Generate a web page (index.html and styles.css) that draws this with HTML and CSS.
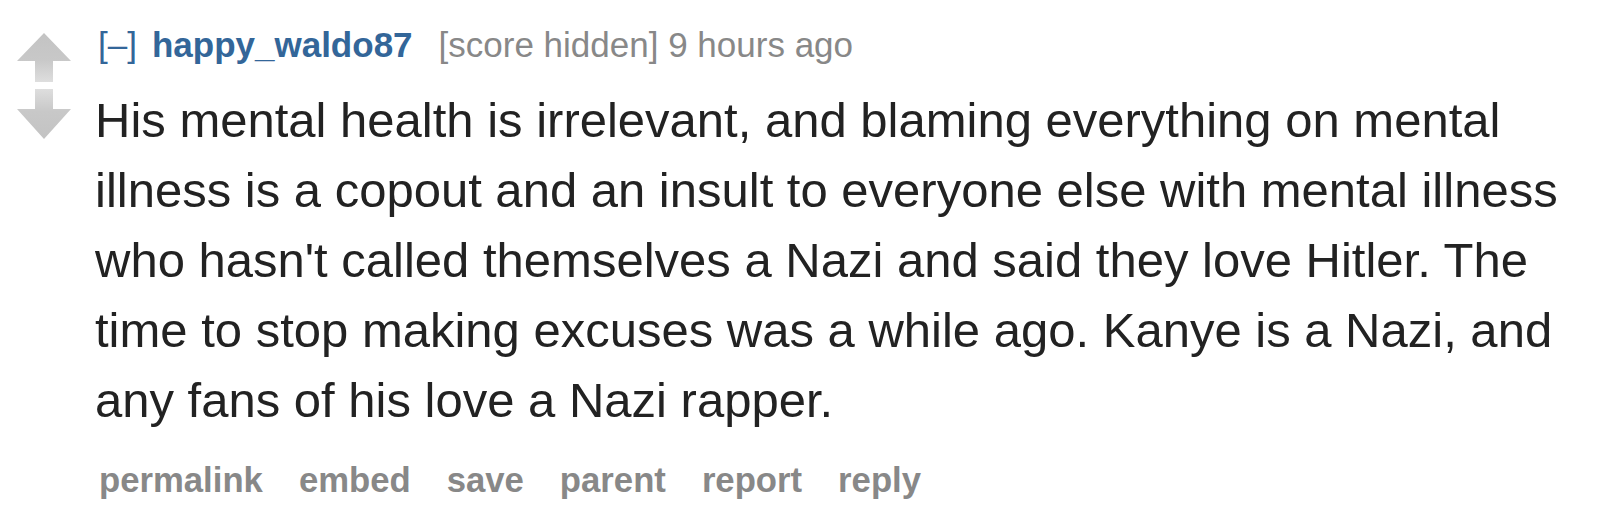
FILE: index.html
```html
<!DOCTYPE html>
<html>
<head>
<meta charset="utf-8">
<link rel="stylesheet" href="styles.css">
</head>
<body>
<div class="comment">
  <div class="midcol">
    <svg class="arrow" width="54" height="49" viewBox="0 0 54 49">
      <defs>
        <linearGradient id="gu" x1="0" y1="0" x2="0" y2="1">
          <stop offset="0" stop-color="#c3c3c3"/>
          <stop offset="0.55" stop-color="#c8c8c8"/>
          <stop offset="1" stop-color="#dedede"/>
        </linearGradient>
      </defs>
      <path d="M27 0 L54 28 L36 28 L36 49 L18 49 L18 28 L0 28 Z" fill="url(#gu)"/>
    </svg>
    <svg class="arrow down" width="54" height="50" viewBox="0 0 54 50">
      <defs>
        <linearGradient id="gd" x1="0" y1="0" x2="0" y2="1">
          <stop offset="0" stop-color="#dedede"/>
          <stop offset="0.45" stop-color="#c8c8c8"/>
          <stop offset="1" stop-color="#c3c3c3"/>
        </linearGradient>
      </defs>
      <path d="M18 0 L36 0 L36 20 L54 20 L27 50 L0 20 L18 20 Z" fill="url(#gd)"/>
    </svg>
  </div>
  <div class="entry">
    <p class="tagline"><a class="expand">[–]</a><a class="author">happy_waldo87</a><span class="score">[score hidden]</span> <time>9 hours ago</time></p>
    <div class="md">His mental health is irrelevant, and blaming everything on mental illness is a copout and an insult to everyone else with mental illness who hasn't called themselves a Nazi and said they love Hitler. The time to stop making excuses was a while ago. Kanye is a Nazi, and any fans of his love a Nazi rapper.</div>
    <ul class="buttons">
      <li>permalink</li>
      <li>embed</li>
      <li>save</li>
      <li>parent</li>
      <li>report</li>
      <li>reply</li>
    </ul>
  </div>
</div>
</body>
</html>
```
FILE: styles.css
```css
html, body {
  margin: 0;
  padding: 0;
  background: #ffffff;
}
body {
  font-family: "Liberation Sans", Arial, sans-serif;
  width: 1600px;
  height: 518px;
  overflow: hidden;
}
.comment {
  display: flex;
  padding-top: 25px;
}
.midcol {
  flex: none;
  width: 54px;
  margin-left: 17px;
  padding-top: 8px;
  display: flex;
  flex-direction: column;
}
.arrow {
  display: block;
}
.arrow.down {
  margin-top: 7px;
}
.entry {
  flex: 1;
  margin-left: 22px;
}
.tagline {
  margin: 0;
  font-size: 35px;
  line-height: 40px;
  color: #888888;
  white-space: nowrap;
}
.expand {
  color: #336699;
  margin-left: 5px;
  margin-right: 15px;
}
.author {
  color: #336699;
  font-weight: bold;
  margin-right: 26px;
}
.md {
  margin-top: 20px;
  margin-left: 2px;
  font-size: 49px;
  line-height: 70px;
  color: #222222;
}
.buttons {
  list-style: none;
  margin: 25px 0 0 6px;
  padding: 0;
  display: flex;
  gap: 36px;
  font-size: 34.7px;
  line-height: 40px;
  font-weight: bold;
  color: #888888;
}
```
